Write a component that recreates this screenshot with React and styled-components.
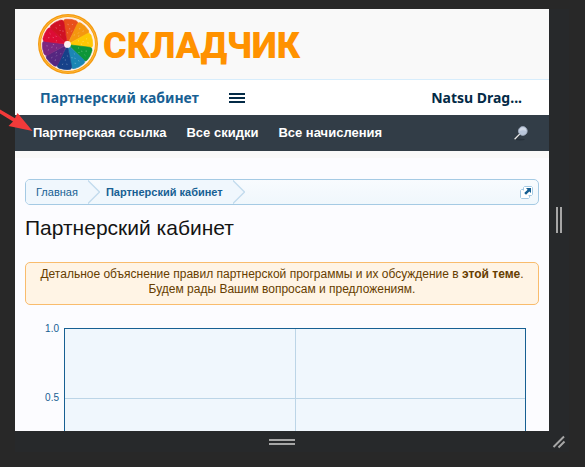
import React from "react";
import styled, { createGlobalStyle } from "styled-components";

const sans = `"Liberation Sans", Arial, sans-serif`;

const GlobalStyle = createGlobalStyle`
  *, *::before, *::after { box-sizing: border-box; }
  body { margin: 0; background: #282828; font-family: ${sans}; }
  a { color: inherit; text-decoration: none; }
  button { border: 0; padding: 0; background: none; cursor: pointer; }
  svg { display: block; }
`;

const Stage = styled.div`
  position: relative;
  height: 100vh;
  padding: 9px 16px 15px 15px;
  overflow: hidden;
`;

const Device = styled.div`
  display: grid;
  grid-template-columns: minmax(0, 1fr) 20px;
  grid-template-rows: minmax(0, 1fr) 21px;
  height: 100%;
  background: #27292b;
`;

const Screen = styled.div`
  overflow: hidden;
  background: #fcfcff;
`;

const Grip = styled.button`
  display: flex;
  flex-direction: ${(p) => (p.$vertical ? "row" : "column")};
  align-items: center;
  justify-content: center;
  gap: 2px;
  cursor: ${(p) => (p.$vertical ? "ew-resize" : "ns-resize")};
`;

const GripBar = styled.span`
  width: ${(p) => (p.$vertical ? "2px" : "26px")};
  height: ${(p) => (p.$vertical ? "26px" : "2px")};
  background: #a6a6a6;
`;

const CornerGrip = styled.button`
  display: grid;
  place-items: center;
  cursor: nwse-resize;
`;

const LogoBar = styled.header`
  display: flex;
  height: 70px;
  padding: 0 23px;
  background: #f9f9f9;
`;

const Logo = styled.a`
  display: flex;
  align-items: center;
  gap: 5px;
`;

const LogoText = styled.span`
  color: #ff9200;
  font: 900 36px/44px Roboto, sans-serif;
  padding-top: 4px;
`;

const AccountBar = styled.div`
  display: flex;
  align-items: center;
  height: 36px;
  padding: 0 27px 0 25px;
  border-top: 1px solid #d7edfc;
  background: #fff;
  font: 700 14px/20px "Noto Sans", sans-serif;
`;

const AccountLink = styled.a`
  color: ${(p) => (p.$current ? "#176093" : "#032a46")};
  margin-left: ${(p) => (p.$end ? "auto" : "0")};
`;

const MenuButton = styled.button`
  display: flex;
  flex-direction: column;
  gap: 2px;
  width: 16px;
  margin-left: 30px;
`;

const MenuLine = styled.span`
  height: 2px;
  background: #032a46;
`;

const NavBar = styled.nav`
  display: flex;
  align-items: center;
  gap: 20px;
  height: 36px;
  padding: 0 20px 0 18px;
  background: #323d47;
`;

const NavLink = styled.a`
  color: #fff;
  font: 700 13px/16px ${sans};
`;

const SearchButton = styled.button`
  margin-left: auto;
`;

const Strip = styled.div`
  height: 7px;
  background: #f9f9f9;
`;

const Content = styled.main`
  padding: 21px 10px 0;
`;

const Breadcrumb = styled.nav`
  display: flex;
  align-items: stretch;
  height: 26px;
  padding-right: 5px;
  border: 1px solid #a5cae4;
  border-radius: 5px;
  background: linear-gradient(#f8fbfe, #f0f7fc);
  overflow: hidden;
`;

const CrumbGroup = styled.div`
  display: flex;
`;

const Crumb = styled.a`
  display: flex;
  align-items: center;
  padding-left: ${(p) => (p.$first ? "10px" : "6px")};
  background: #f0f7fd;
  color: #176093;
  font: ${(p) => (p.$current ? 700 : 400)} 11px/24px ${sans};
`;

const CrumbText = styled.span`
  padding-right: 10px;
`;

const PopupButton = styled.button`
  margin-left: auto;
  align-self: center;
`;

const Title = styled.h1`
  margin: 10px 0 0;
  color: #141414;
  font: 400 21px/26px ${sans};
`;

const Notice = styled.p`
  margin: 21px 0 0;
  padding: 4px 10px 7px;
  border: 1px solid #f9bc6d;
  border-radius: 5px;
  background: #fff4e5;
  color: #663d00;
  font: 400 12px/15px ${sans};
  text-align: center;
`;

const Chart = styled.figure`
  display: grid;
  grid-template-columns: 34px minmax(0, 1fr);
  column-gap: 5px;
  margin: 23px 13px 0 0;
`;

const AxisLabels = styled.div`
  display: grid;
  grid-template-rows: 69px 69px 12px;
  margin-top: -5px;
  color: #176093;
  font: 400 10px/12px ${sans};
  text-align: right;
`;

const Plot = styled.div`
  display: grid;
  grid-template-columns: 1fr 1fr;
  grid-template-rows: 70px 69px;
  border: 1px solid #176093;
  background: #f0f7fd;
`;

const Cell = styled.div`
  border-style: solid;
  border-color: #bcd5e7;
  border-width: 0 0 ${(p) => (p.$bottom ? "1px" : "0")} ${(p) => (p.$left ? "1px" : "0")};
`;

const Pointer = styled.svg`
  position: absolute;
  left: 0;
  top: 100px;
  pointer-events: none;
`;

const SLICES = [
  "#e8501b", "#f4970f", "#fdc703", "#0d9638", "#1b86b4",
  "#164189", "#552780", "#7c2880", "#dc0c35", "#d01123",
];

function OrangeMark() {
  return (
    <svg width="60" height="60" viewBox="0 0 60 60" aria-hidden="true">
      <circle cx="30" cy="30" r="30" fill="#f49a10" />
      <circle cx="30" cy="30" r="28.3" fill="none" stroke="#ffb938" strokeWidth="1" />
      <circle cx="30" cy="30" r="27" fill="#fff0e6" />
      {SLICES.map((color, i) => (
        <g key={color} transform={`rotate(${8 + i * 36} 29.5 30.4)`}>
          <path
            d="M28.6 27.2 L22.4 9.2 Q21.6 6.4 24.4 5.7 Q29.5 4.6 34.6 5.7 Q37.4 6.4 36.6 9.2 L30.4 27.2Z"
            fill={color}
            stroke={color}
            strokeWidth=".6"
            strokeLinejoin="round"
          />
          <path
            d="M27 10l.6 1.2M31.8 9.4l-.4 1.2M29.4 14l.1 1.2M32 16l-.5 1.2M27.7 18.4l.4 1"
            stroke="#fff"
            strokeOpacity=".35"
            strokeWidth=".8"
          />
        </g>
      ))}
      <circle cx="29.5" cy="30.4" r="3.4" fill="#fff0f0" />
    </svg>
  );
}

function SearchIcon() {
  return (
    <svg width="16" height="16" viewBox="0 0 16 16" aria-hidden="true">
      <ellipse cx="7" cy="14.6" rx="5" ry=".8" fill="#27313a" />
      <path d="M2 14.4 6.8 9.6" stroke="#1d252c" strokeWidth="2" />
      <path d="M1.6 14.2 6.8 9" stroke="#e8e8e8" strokeWidth="1.3" />
      <circle cx="9.8" cy="6" r="4.4" fill="#b9c6da" stroke="#a3afc0" strokeWidth=".8" />
      <path d="M6.4 6a3.4 3.4 0 0 1 6.8-.2Q9.8 4.6 6.4 6Z" fill="#cfd8e6" />
    </svg>
  );
}

function PopupIcon() {
  return (
    <svg width="13" height="13" viewBox="0 0 13 13" aria-hidden="true">
      <path d="M3.5 3.5H1.5L.5 4.5V11.5L1.5 12.5H8.5L9.5 11.5V9.5" fill="#fff" stroke="#a5cae4" />
      <path d="M3.5 4.5V1.5L4.5.5H11.5L12.5 1.5V8.5L11.5 9.5H8.5" fill="#fff" stroke="#a5cae4" />
      <path d="M6 2H11V7L9.3 5.4 6 8.8 4.2 7 7.6 3.7Z" fill="#176093" />
    </svg>
  );
}

function CrumbArrow() {
  return (
    <svg width="12" height="24" viewBox="0 0 12 24" aria-hidden="true">
      <path d="M-.5 0 11.5 12-.5 24" fill="#f0f7fd" stroke="#c2dbed" strokeWidth="1.3" />
    </svg>
  );
}

export default function App() {
  return (
    <Stage>
      <GlobalStyle />
      <Device>
        <Screen>
          <LogoBar>
            <Logo href="#">
              <OrangeMark />
              <LogoText>СКЛАДЧИК</LogoText>
            </Logo>
          </LogoBar>
          <AccountBar>
            <AccountLink href="#" $current>Партнерский кабинет</AccountLink>
            <MenuButton aria-label="Меню">
              <MenuLine />
              <MenuLine />
              <MenuLine />
            </MenuButton>
            <AccountLink href="#" $end>Natsu Drag...</AccountLink>
          </AccountBar>
          <NavBar>
            <NavLink href="#">Партнерская ссылка</NavLink>
            <NavLink href="#">Все скидки</NavLink>
            <NavLink href="#">Все начисления</NavLink>
            <SearchButton aria-label="Поиск"><SearchIcon /></SearchButton>
          </NavBar>
          <Strip />
          <Content>
            <Breadcrumb>
              <CrumbGroup>
                <Crumb href="#" $first><CrumbText>Главная</CrumbText></Crumb>
                <CrumbArrow />
              </CrumbGroup>
              <CrumbGroup>
                <Crumb href="#" $current><CrumbText>Партнерский кабинет</CrumbText></Crumb>
                <CrumbArrow />
              </CrumbGroup>
              <PopupButton aria-label="Открыть навигацию"><PopupIcon /></PopupButton>
            </Breadcrumb>
            <Title>Партнерский кабинет</Title>
            <Notice>
              Детальное объяснение правил партнерской программы и их обсуждение в{" "}
              <a href="#"><b>этой теме</b></a>.
              <br />
              Будем рады Вашим вопросам и предложениям.
            </Notice>
            <Chart>
              <AxisLabels>
                <span>1.0</span>
                <span>0.5</span>
              </AxisLabels>
              <Plot>
                <Cell $bottom />
                <Cell $left $bottom />
                <Cell />
                <Cell $left />
              </Plot>
            </Chart>
          </Content>
        </Screen>
        <Grip $vertical aria-label="Изменить ширину">
          <GripBar $vertical />
          <GripBar $vertical />
        </Grip>
        <Grip aria-label="Изменить высоту">
          <GripBar />
          <GripBar />
        </Grip>
        <CornerGrip aria-label="Изменить размер">
          <svg width="14" height="14" viewBox="0 0 14 14" aria-hidden="true">
            <path d="M1.5 12 12 1.5M6.5 12.5 12.5 6.5" stroke="#a6a6a6" strokeWidth="2" />
          </svg>
        </CornerGrip>
      </Device>
      <Pointer width="34" height="34" viewBox="0 0 34 34" aria-hidden="true">
        <path d="M-1 9 15 18.2 17.5 13 32.5 31 8.5 26 13 21.5 -1 13Z" fill="#f23a3a" />
      </Pointer>
    </Stage>
  );
}
